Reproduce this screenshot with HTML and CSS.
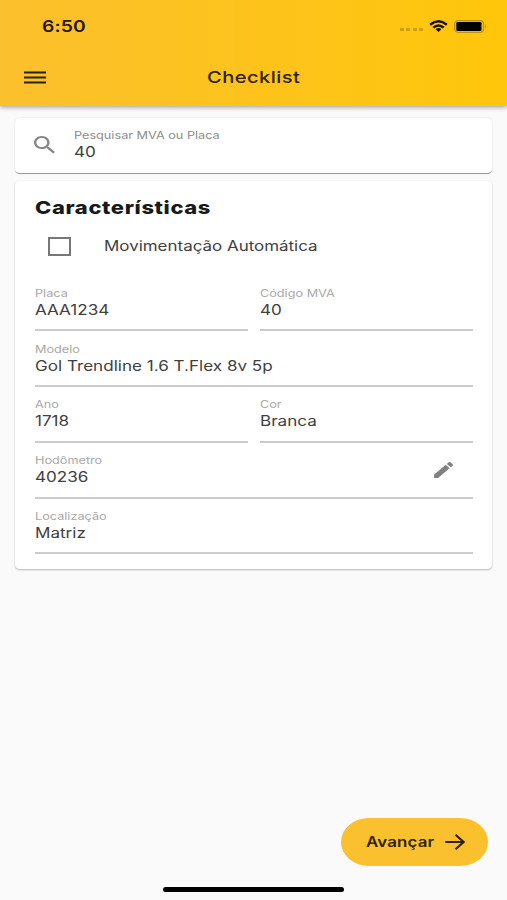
FILE: index.html
```html
<!DOCTYPE html>
<html lang="pt-BR">
<head>
<meta charset="utf-8">
<title>Checklist</title>
<link rel="stylesheet" href="styles.css">
</head>
<body>
<header class="appbar">
  <div class="status">
    <span class="t clock">6:50</span>
    <div class="indicators">
      <span class="cell"><i></i><i></i><i></i><i></i></span>
      <svg class="wifi" viewBox="0 0 20 13" preserveAspectRatio="none" fill="none" stroke="#171200" stroke-width="2.6"><path d="M1.2 5.1Q10-2.2 18.8 5.1M4.5 8.2Q10 3.5 15.5 8.2"/><path d="M6.9 10.1Q10 7.5 13.1 10.1L10 13Z" fill="#171200" stroke="none"/></svg>
      <svg class="battery" viewBox="0 0 33 13"><rect x=".7" y=".7" width="28.8" height="11.6" rx="3.3" fill="none" stroke="#bd9210" stroke-width="1.3"/><rect x="2.3" y="2.1" width="25.2" height="8.8" rx="1.2" fill="#000"/><path d="M31 4.5Q33 6.5 31 8.5Z" fill="#a47e0d"/></svg>
    </div>
  </div>
  <div class="toolbar">
    <svg class="menu" viewBox="0 0 22 13"><path d="M0 1.5h22M0 6.5h22M0 11.5h22" stroke="#2c220b" stroke-width="2"/></svg>
    <h1 class="title"><span class="t">Checklist</span></h1>
  </div>
</header>
<main>
  <section class="card search">
    <svg class="lens" viewBox="3 3 17.5 17.5" preserveAspectRatio="none" fill="#858585"><path d="M15.5 14h-.79l-.28-.27C15.41 12.59 16 11.11 16 9.5 16 5.91 13.09 3 9.5 3S3 5.91 3 9.5 5.91 16 9.5 16c1.61 0 3.09-.59 4.23-1.57l.27.28v.79l5 4.99L20.49 19l-4.99-5zm-6 0C7.01 14 5 11.99 5 9.5S7.01 5 9.5 5 14 7.01 14 9.5 11.99 14 9.5 14z"/></svg>
    <div class="field-text"><span class="t label">Pesquisar MVA ou Placa</span><span class="t value">40</span></div>
  </section>
  <section class="card details">
    <h2 class="heading"><span class="t">Características</span></h2>
    <div class="check"><span class="box"></span><span class="t check-label">Movimentação Automática</span></div>
    <div class="grid">
      <div class="field"><span class="t label">Placa</span><span class="t value">AAA1234</span></div>
      <div class="field"><span class="t label">Código MVA</span><span class="t value">40</span></div>
      <div class="field wide"><span class="t label">Modelo</span><span class="t value">Gol Trendline 1.6 T.Flex 8v 5p</span></div>
      <div class="field"><span class="t label">Ano</span><span class="t value">1718</span></div>
      <div class="field"><span class="t label">Cor</span><span class="t value">Branca</span></div>
      <div class="field wide"><span class="t label">Hodômetro</span><span class="t value">40236</span>
        <svg class="pencil" viewBox="3 3 18 18" preserveAspectRatio="none" fill="#808080"><path d="M3 17.25V20.2Q3 21 3.8 21H6.75L17.81 9.94l-3.75-3.75L3 17.25zM20.71 7.04c.39-.39.39-1.02 0-1.41l-2.34-2.34c-.39-.39-1.02-.39-1.41 0l-1.83 1.83 3.75 3.75 1.83-1.83z"/></svg></div>
      <div class="field wide"><span class="t label">Localização</span><span class="t value">Matriz</span></div>
    </div>
  </section>
</main>
<footer>
  <button class="next"><span class="t">Avançar</span><svg class="arrow" viewBox="0 0 20 16" fill="none" stroke="#2d220b" stroke-width="2.1"><path d="M.3 8h18M10.5.8L18.6 8l-8.1 7.2"/></svg></button>
  <div class="home"></div>
</footer>
</body>
</html>
```
FILE: styles.css
```css
* { box-sizing: border-box; }
body {
  margin: 0;
  height: 900px;
  display: flex;
  flex-direction: column;
  overflow: hidden;
  background: #fafafa;
  color: #404040;
  font-family: Inter, "Liberation Sans", sans-serif;
}
h1, h2 { margin: 0; }
/* Wide letterforms */
.t {
  display: block;
  width: max-content;
  white-space: nowrap;
  transform: scaleX(1.22);
  transform-origin: left center;
}
.appbar {
  height: 105.5px;
  flex: none;
  background: linear-gradient(90deg, #fbc02d, #ffc60b);
  box-shadow: 0 1px 5px rgba(0, 0, 0, .4);
  color: #2c220b;
}
.status {
  height: 52px;
  padding: 0 20px 0 42px;
  display: flex;
  align-items: center;
  justify-content: space-between;
}
.clock { font-size: 15.8px; font-weight: 600; letter-spacing: .1px; color: #201800; }
.indicators { display: flex; align-items: center; }
.cell { display: flex; gap: 2.3px; margin: 7px 6px 0 0; }
.cell i { width: 4px; height: 3px; border-radius: 1px; background: #cc9c14; }
.wifi { width: 19px; height: 12px; margin: 0 6px 1px 0; }
.battery { width: 33px; height: 13px; }
.toolbar {
  height: 50px;
  padding: 0 24px;
  display: flex;
  align-items: center;
}
.menu { width: 22px; height: 13px; }
.title { margin-left: 161px; font-size: 16.5px; font-weight: 500; letter-spacing: .35px; }
main { padding: 12px 14.6px 0 15.4px; flex: 1; }
.card {
  background: #fff;
  border-radius: 5px / 4px;
  box-shadow: 0 1px 2px rgba(0, 0, 0, .28);
}
.search {
  height: 56px;
  display: flex;
  align-items: center;
  padding-left: 18.6px;
  border-bottom: 1px solid #9c9c9c;
  box-shadow: 0 0 2px rgba(0, 0, 0, .12);
}
.lens { width: 21px; height: 17.5px; margin-right: 19.3px; }
.label { font-size: 10.4px; line-height: 13px; color: #a8a8a8; }
.value { font-size: 14px; line-height: 18px; margin-top: 1px; }
.search .label { color: #8c8c8c; }
.details { margin-top: 7.5px; height: 388px; padding: 15.5px 19.6px 0; }
.heading { font-size: 18px; font-weight: 800; line-height: 22px; letter-spacing: .5px; color: #191919; }
.check { height: 53px; display: flex; align-items: center; padding: 2px 0 0 13px; }
.box { width: 23px; height: 19px; border: 2px solid #777; }
.check-label { margin-left: 33px; font-size: 13.9px; }
.grid {
  display: grid;
  grid-template-columns: 1fr 1fr;
  grid-auto-rows: 55.75px;
  column-gap: 12px;
  margin-top: 4px;
}
.field { position: relative; padding-top: 11.3px; border-bottom: 2px solid #ccc; }
.wide { grid-column: span 2; }
.pencil { position: absolute; right: 20px; top: 19px; width: 19px; height: 16px; }
footer { flex: none; height: 82px; display: flex; flex-direction: column; }
.next {
  align-self: flex-end;
  margin-right: 19.5px;
  width: 147px;
  height: 48px;
  padding: 0 0 1px 25px;
  border: 0;
  border-radius: 28px / 24px;
  background: #fbc02d;
  color: #2d220b;
  font: 600 13.8px Inter, sans-serif;
  letter-spacing: .15px;
  display: flex;
  align-items: center;
}
.arrow { width: 20px; height: 16px; margin: 1px 0 0 23px; }
.home { width: 181px; height: 5px; margin: 21px auto 0; border-radius: 3px; background: #000; }
```
